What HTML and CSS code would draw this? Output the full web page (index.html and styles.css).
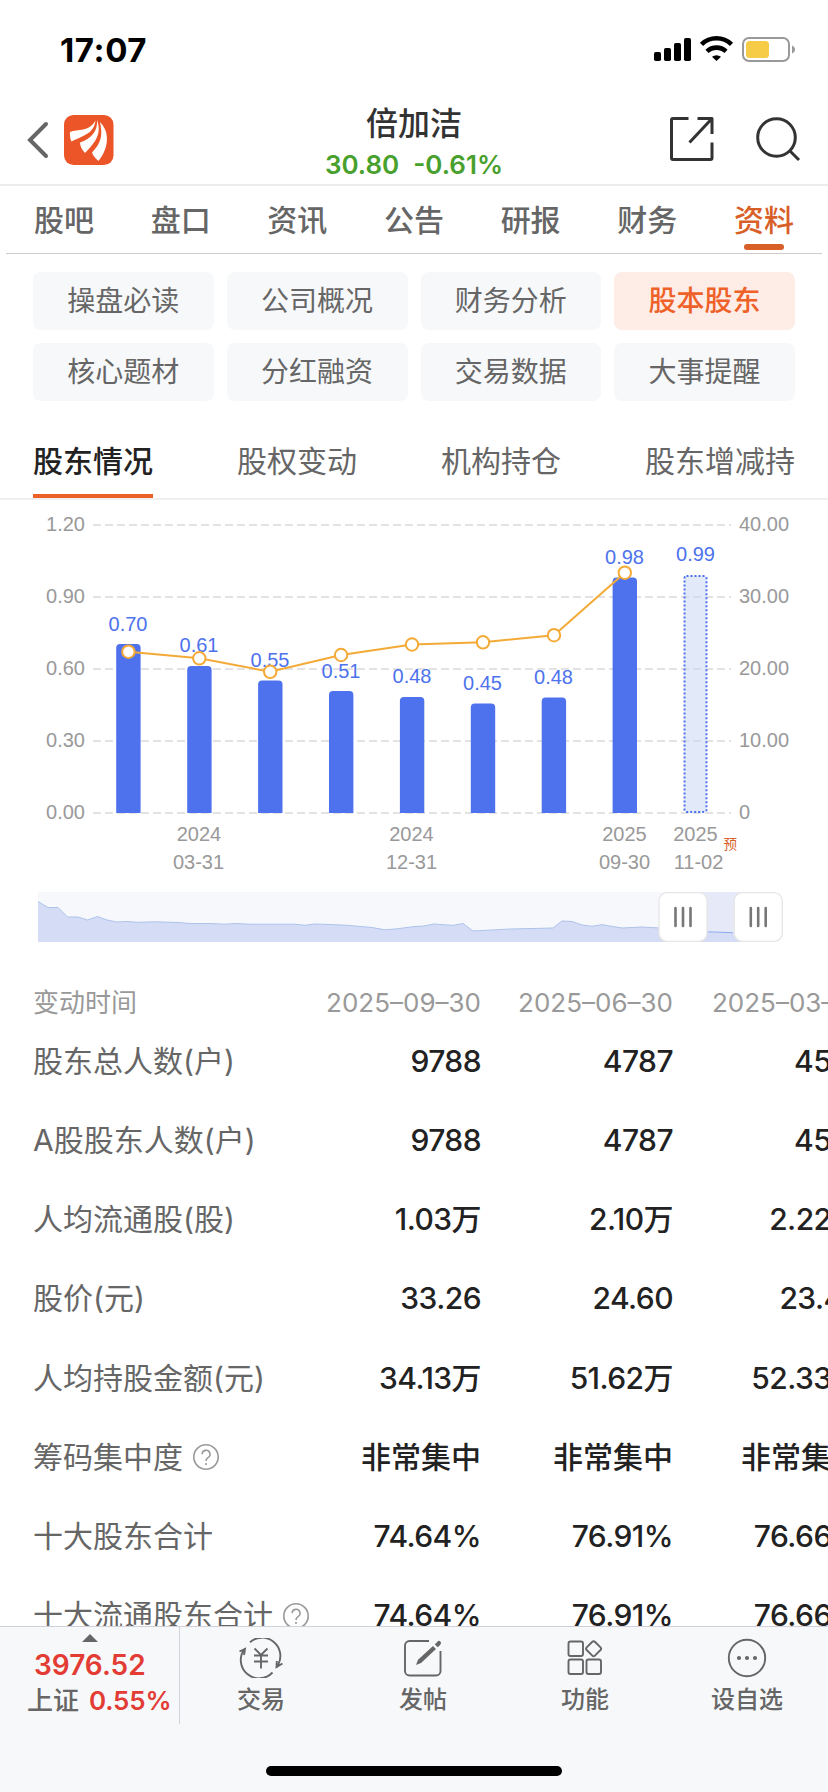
FILE: index.html
```html
<!DOCTYPE html>
<html lang="zh-CN">
<head>
<meta charset="utf-8">
<title>倍加洁</title>
<link rel="stylesheet" href="styles.css">
</head>
<body>
<div class="screen">
  <div class="status">
    <span class="time">17:07</span>
    <svg class="status-icons" width="144" height="28" viewBox="0 0 144 28">
      <rect x="1" y="16" width="7" height="9" rx="1.8"/>
      <rect x="11" y="12" width="7" height="13" rx="1.8"/>
      <rect x="21" y="7" width="7" height="18" rx="1.8"/>
      <rect x="31" y="2" width="7" height="23" rx="1.8"/>
      <path d="M48.500 8.400a21.500 21.500 0 0 1 30 0" fill="none" stroke="#000" stroke-width="4.600"/>
      <path d="M54 15.400a13.800 13.800 0 0 1 19 0" fill="none" stroke="#000" stroke-width="4.600"/>
      <path d="M59 20.800a7 7 0 0 1 9 0L63.500 25z" fill="#000"/>
      <rect x="90" y="2" width="46" height="23" rx="6" fill="#fff" stroke="#999" stroke-width="2"/>
      <rect x="93" y="5" width="23" height="17" rx="3.500" fill="#f6cb46"/>
      <path d="M139 9.500c4 1.500 4 6.500 0 8z" fill="#999"/>
    </svg>
  </div>
  <header class="header">
    <div class="header-left">
      <svg width="24" height="40" viewBox="0 0 24 40"><path d="M20 4L4 20L20 36" fill="none" stroke="#666" stroke-width="4" stroke-linecap="round" stroke-linejoin="miter"/></svg>
      <svg width="50" height="50" viewBox="0 0 50 50">
        <rect width="49.500" height="50" rx="9.500" fill="#ec5527"/>
        <g fill="#fff"><path d="M6 17C14 14 25 17 31.500 5.500C30 18 21 20 7.500 26.500C6 24 5.800 20 6 17z"/><path d="M16 27.500C27 24 34 16 33 5C38 18 32 27 21 38C18 35 16 31 16 27.500z"/><path d="M36 7C46 17 45 33 34.500 46C31.500 43.500 28.500 40 28 37.500C37 28 39 21 36 7z"/></g>
      </svg>
    </div>
    <div class="header-title"><div class="name">倍加洁</div><div class="quote"><span>30.80</span><span>-0.61%</span></div></div>
    <div class="header-right">
      <svg width="46" height="46" viewBox="0 0 46 46" fill="none" stroke="#333" stroke-width="3" stroke-linecap="butt" stroke-linejoin="round"><path d="M19.500 2.500H4a1.500 1.500 0 0 0-1.500 1.500V42A1.500 1.500 0 0 0 4 43.500H41.500A1.500 1.500 0 0 0 43 42V26.500M28.500 2.500H43V18M43 2.500L20.500 26.500"/></svg>
      <svg width="46" height="46" viewBox="0 0 46 46" fill="none" stroke="#333" stroke-width="3"><circle cx="21.500" cy="21.500" r="18.800"/><path d="M34.500 34.500L44 44"/></svg>
    </div>
  </header>
  <nav class="tabs"><span>股吧</span><span>盘口</span><span>资讯</span><span>公告</span><span>研报</span><span>财务</span><span class="on">资料</span></nav>
  <div class="chips">
    <span>操盘必读</span><span>公司概况</span><span>财务分析</span><span class="on">股本股东</span>
    <span>核心题材</span><span>分红融资</span><span>交易数据</span><span>大事提醒</span>
  </div>
  <nav class="subtabs"><span class="on">股东情况</span><span>股权变动</span><span>机构持仓</span><span>股东增减持</span></nav>
  <svg class="chart" width="828" height="460" viewBox="0 500 828 460">
    <g stroke="#e3e3e3" stroke-width="2" stroke-dasharray="8 4"><path d="M93 525H731"/><path d="M93 597H731"/><path d="M93 669H731"/><path d="M93 741H731"/><path d="M93 813H731"/></g>
    <g class="axis" text-anchor="end"><text x="85" y="530.500">1.20</text><text x="85" y="602.500">0.90</text><text x="85" y="674.500">0.60</text><text x="85" y="746.500">0.30</text><text x="85" y="818.500">0.00</text></g>
    <g class="axis"><text x="739" y="530.500">40.00</text><text x="739" y="602.500">30.00</text><text x="739" y="674.500">20.00</text><text x="739" y="746.500">10.00</text><text x="739" y="818.500">0</text></g>
    <g fill="#4e72ed">
      <path d="M116.200 813V648a4 4 0 0 1 4-4h16.400a4 4 0 0 1 4 4V813z"/>
      <path d="M187.200 813V670a4 4 0 0 1 4-4h16.400a4 4 0 0 1 4 4V813z"/>
      <path d="M258.100 813V684.500a4 4 0 0 1 4-4h16.400a4 4 0 0 1 4 4V813z"/>
      <path d="M329 813V695a4 4 0 0 1 4-4h16.400a4 4 0 0 1 4 4V813z"/>
      <path d="M399.900 813V701a4 4 0 0 1 4-4h16.400a4 4 0 0 1 4 4V813z"/>
      <path d="M470.800 813V707.500a4 4 0 0 1 4-4h16.400a4 4 0 0 1 4 4V813z"/>
      <path d="M541.700 813V701.500a4 4 0 0 1 4-4h16.400a4 4 0 0 1 4 4V813z"/>
      <path d="M612.600 813V581.500a4 4 0 0 1 4-4h16.400a4 4 0 0 1 4 4V813z"/>
    </g>
    <rect x="684.500" y="576" width="22" height="236" rx="2" fill="#c8d5f2" fill-opacity=".52" stroke="#4e72ed" stroke-width="2" stroke-dasharray="2 2"/>
    <g class="val" text-anchor="middle"><text x="128" y="631">0.70</text><text x="199" y="652">0.61</text><text x="270" y="667">0.55</text><text x="341" y="678">0.51</text><text x="412" y="683">0.48</text><text x="482.500" y="690">0.45</text><text x="553.500" y="684">0.48</text><text x="624.500" y="564">0.98</text><text x="695.500" y="561">0.99</text></g>
    <g fill="#fff" stroke="#f3aa36" stroke-width="2">
      <path fill="none" d="M128.400 651.700L199.300 658.300L270.200 671.800L341.100 655L412 644.500L483 642.300L554 635.200L624.800 572.700"/>
      <circle cx="128.400" cy="651.700" r="6.200"/><circle cx="199.300" cy="658.300" r="6.200"/><circle cx="270.200" cy="671.800" r="6.200"/><circle cx="341.100" cy="655" r="6.200"/><circle cx="412" cy="644.500" r="6.200"/><circle cx="483" cy="642.300" r="6.200"/><circle cx="554" cy="635.200" r="6.200"/><circle cx="624.800" cy="572.700" r="6.200"/>
    </g>
    <g class="axis" text-anchor="middle"><text x="199" y="841">2024</text><text x="198.500" y="869">03-31</text><text x="411.500" y="841">2024</text><text x="411.500" y="869">12-31</text><text x="624.500" y="841">2025</text><text x="624.500" y="869">09-30</text><text x="695.500" y="841">2025</text><text x="698.500" y="869">11-02</text></g>
    <text class="forecast" x="723.500" y="849">预</text>
    <rect x="38" y="892" width="733" height="50" fill="#f7f8fb"/>
    <path fill="#d5ddf6" d="M38 901.500L48 907.500H58L67.500 917H78L87.500 920L97.500 916.500L107 920L117 922L127 921.500L137 922.300L155 921.800L178 922.500L190 923.500H210L225 924.200L236 923.500L250 924.200H295L305 925.300L315 924L330 924.500L347 925.300L372 927.500L385 929.800L397 928.800L414 926.600L424 926L434 924L453 925.400L463 923.500L473 931L510 929L553 928L562 921L572 921.500L582 925L592 926.300L602 924.700L622 928L642 927L660 928L683 931L733 933H771V942H38z"/>
    <path fill="none" stroke="#aec3eb" d="M38 901.500L48 907.500H58L67.500 917H78L87.500 920L97.500 916.500L107 920L117 922L127 921.500L137 922.300L155 921.800L178 922.500L190 923.500H210L225 924.200L236 923.500L250 924.200H295L305 925.300L315 924L330 924.500L347 925.300L372 927.500L385 929.800L397 928.800L414 926.600L424 926L434 924L453 925.400L463 923.500L473 931L510 929L553 928L562 921L572 921.500L582 925L592 926.300L602 924.700L622 928L642 927L660 928"/>
    <path fill="#e5e9f8" d="M683 892H758V933L683 931z"/><path fill="none" stroke="#8ca9ef" d="M683 931L733 932.700"/>
    <g fill="#fff" stroke="#e6e6e6" stroke-width="1.300"><rect x="659" y="892.700" width="48" height="48.600" rx="8"/><rect x="734.300" y="892.700" width="48" height="48.600" rx="8"/></g>
    <g stroke="#777" stroke-width="2.600" stroke-linecap="round"><path d="M675.500 908V926M683 908V926M690.500 908V926M750.800 908V926M758.200 908V926M765.700 908V926"/></g>
  </svg>
  <main class="table">
    <div class="row head"><span class="lab">变动时间</span><span>2025–09–30</span><span>2025–06–30</span><span>2025–03–31</span></div>
    <div class="row"><span class="lab">股东总人数(户)</span><span>9788</span><span>4787</span><span>4512</span></div>
    <div class="row"><span class="lab">A股股东人数(户)</span><span>9788</span><span>4787</span><span>4512</span></div>
    <div class="row"><span class="lab">人均流通股(股)</span><span>1.03万</span><span>2.10万</span><span>2.22万</span></div>
    <div class="row"><span class="lab">股价(元)</span><span>33.26</span><span>24.60</span><span>23.48</span></div>
    <div class="row"><span class="lab">人均持股金额(元)</span><span>34.13万</span><span>51.62万</span><span>52.33万</span></div>
    <div class="row words"><span class="lab">筹码集中度<svg class="help" width="28" height="28" viewBox="0 0 28 28" fill="none" stroke="#999" stroke-width="1.600"><circle cx="14" cy="14" r="12.200"/><path d="M10.200 11.300a3.900 3.900 0 1 1 5.800 3.300c-1.400.8-2 1.400-2 3.400"/><path d="M14 20v2"/></svg></span><span>非常集中</span><span>非常集中</span><span>非常集中</span></div>
    <div class="row"><span class="lab">十大股东合计</span><span>74.64%</span><span>76.91%</span><span>76.66%</span></div>
    <div class="row"><span class="lab">十大流通股东合计<svg class="help" width="28" height="28" viewBox="0 0 28 28" fill="none" stroke="#999" stroke-width="1.600"><circle cx="14" cy="14" r="12.200"/><path d="M10.200 11.300a3.900 3.900 0 1 1 5.800 3.300c-1.400.8-2 1.400-2 3.400"/><path d="M14 20v2"/></svg></span><span>74.64%</span><span>76.91%</span><span>76.66%</span></div>
  </main>
  <footer class="footer">
    <div class="bar">
      <div class="index"><i class="tri"></i><b>3976.52</b><div class="idx2"><span>上证</span><em>0.55%</em></div></div>
      <div class="item"><svg width="46" height="40" viewBox="0 0 46 40" fill="none" stroke="#666" stroke-width="1.900"><path d="M12 4.200A18.300 18.300 0 0 1 40.500 26L38.500 29.500M34.500 34.500A18.300 18.300 0 0 1 6.500 11M1.500 13.500L7 10.800L6 17M44.500 25.500L38.500 29L38.800 23"/><path d="M16.500 10.500L23 17L29.500 10.500M16 17.500H30M16 23.500H30M23 17V30.500"/></svg><span>交易</span></div>
      <div class="item"><svg width="46" height="40" viewBox="0 0 46 40" fill="none" stroke="#666" stroke-width="1.900"><path d="M29 3H9.500A4.500 4.500 0 0 0 5 7.500V33A4.500 4.500 0 0 0 9.500 37.500H36A4.500 4.500 0 0 0 40.500 33V13"/><path stroke="none" fill="#666" d="M16 27L18 21.800L33 8L36 11L21 25zM34.800 6.500L37.200 4Q39.500 1.500 41 4.500Q41.500 6 37.800 9.300z"/></svg><span>发帖</span></div>
      <div class="item"><svg width="46" height="40" viewBox="0 0 46 40" fill="none" stroke="#666" stroke-width="1.900"><rect x="6.500" y="3.500" width="14.500" height="14.500" rx="2"/><rect x="6.500" y="21.500" width="14.500" height="14.500" rx="2"/><rect x="24.500" y="21.500" width="14.500" height="14.500" rx="2"/><rect x="25.800" y="4.900" width="11.600" height="11.600" rx="1.800" transform="rotate(45 31.600 10.700)"/></svg><span>功能</span></div>
      <div class="item"><svg width="46" height="40" viewBox="0 0 46 40" fill="none" stroke="#666" stroke-width="1.900"><circle cx="23" cy="20" r="18.200"/><g fill="#666" stroke="none"><circle cx="15" cy="20" r="2.100"/><circle cx="23" cy="20" r="2.100"/><circle cx="31" cy="20" r="2.100"/></g></svg><span>设自选</span></div>
    </div>
    <div class="home"></div>
  </footer>
</div>
</body>
</html>
```
FILE: styles.css
```css
* { box-sizing: border-box; }
body { margin: 0; background: #fff; font-family: Inter, "Noto Sans CJK SC", sans-serif; color: #666; }
svg { display: block; flex: none; }
.screen { width: 828px; height: 1792px; overflow: hidden; display: flex; flex-direction: column; }
.status { height: 88px; flex: none; display: flex; justify-content: space-between; padding: 30px 31px 0 60px; }
.time { font-size: 33px; line-height: 40px; font-weight: 700; color: #000; letter-spacing: .6px; }
.status-icons { margin-top: 6px; }
.header { height: 98px; flex: none; border-bottom: 2px solid #ececec; display: grid; grid-template-columns: 1fr auto 1fr; align-items: start; }
.header-left { display: flex; align-items: center; gap: 14px; padding: 27px 0 0 26px; }
.header-title { text-align: center; padding-top: 16px; }
.name { font-size: 32px; line-height: 40px; font-weight: 500; color: #333; }
.quote { display: flex; gap: 14px; margin-top: 5px; font-size: 26px; line-height: 32px; font-weight: 600; color: #48a02d; }
.header-right { display: flex; justify-content: flex-end; gap: 40px; padding: 28px 27px 0 0; }
.tabs { height: 68px; flex: none; margin: 0 6px; padding: 0 28px; border-bottom: 1px solid #ccc; display: flex; justify-content: space-between; font-size: 30px; line-height: 68px; font-weight: 500; }
.tabs .on { color: #d85f27; position: relative; }
.tabs .on::after { content: ""; position: absolute; left: 10px; right: 10px; top: 58px; height: 6px; border-radius: 3px; background: #d85f27; }
.chips { flex: none; display: grid; grid-template-columns: repeat(4, 1fr); gap: 13px; padding: 18px 33px 0; }
.chips span { height: 58px; border-radius: 8px; background: #f7f8fa; text-align: center; font-size: 28px; line-height: 58px; }
.chips .on { background: #fdede6; color: #ee6128; font-weight: 500; }
.subtabs { flex: none; height: 76px; margin-top: 23px; padding: 0 33px; border-bottom: 2px solid #efefef; display: flex; justify-content: space-between; font-size: 30px; line-height: 74px; }
.subtabs span { height: 74px; }
.subtabs .on { color: #222; font-weight: 500; border-bottom: 4px solid #ec612a; }
.chart { font-family: "Liberation Sans", sans-serif; }
.axis { font-size: 20px; fill: #999; }
.val { font-size: 20px; fill: #4e72ed; }
.forecast { font-family: "Noto Sans CJK SC", sans-serif; font-size: 13.5px; fill: #d85f27; }
.table { flex: none; height: 666px; padding-top: 21px; overflow: hidden; }
.row { height: 79.15px; display: grid; grid-template-columns: 300px 148px 192px 188px; padding-left: 33px; align-items: baseline; font-size: 30px; line-height: 79.15px; letter-spacing: -.55px; font-weight: 500; color: #222; text-align: right; white-space: nowrap; }
.row span { display: flex; justify-content: flex-end; }
.row .lab { font-size: 30px; font-weight: 400; letter-spacing: 0; color: #666; text-align: left; justify-content: flex-start; align-items: center; }
.row .help { margin-left: 9px; }
.words { letter-spacing: 0; }
.head { height: 41px; line-height: 43px; font-size: 26px; font-weight: 400; letter-spacing: 0; color: #999; }
.head .lab { font-size: 26px; color: #999; }
.footer { flex: 1; border-top: 1px solid #d2d0da; background: #f7f8fa; }
.bar { height: 97px; display: flex; }
.index { width: 180px; border-right: 1px solid #d2d0da; display: flex; flex-direction: column; color: #e23c34; padding-top: 7px; }
.tri { align-self: center; border: 8px solid transparent; border-top: 0; border-bottom: 8px solid #666; }
.index b { font-size: 28px; line-height: 32px; font-weight: 600; margin: 7px 0 0 34px; }
.idx2 { display: flex; gap: 10px; margin-left: 27px; font-size: 26px; line-height: 39px; font-weight: 500; }
.idx2 span { color: #666; }
.idx2 em { font-style: normal; font-weight: 600; letter-spacing: -.2px; }
.item { flex: 1; display: flex; flex-direction: column; align-items: center; padding-top: 11px; font-size: 24px; line-height: 39px; font-weight: 500; gap: 2px; }
.home { width: 296px; height: 10px; border-radius: 5px; background: #000; margin: 42px auto 0; }
```
